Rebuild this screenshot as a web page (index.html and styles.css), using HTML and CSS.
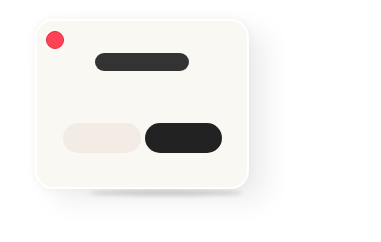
FILE: index.html
```html
<!DOCTYPE html>
<html lang="en">
<head>
  <meta charset="UTF-8">
  <meta name="viewport" content="width=device-width, initial-scale=1.0">
  <title>Dialog</title>
  <link rel="stylesheet" href="styles.css">
</head>
<body>
  <div class="dialog">
    <!-- 关闭按钮 -->
    <div class="close-dot"></div>

    <!-- 标题条 -->
    <div class="title-bar"></div>

    <!-- 底部按钮 -->
    <div class="actions">
      <div class="btn btn-cancel"></div>
      <div class="btn btn-ok"></div>
    </div>
  </div>
</body>
</html>
```

FILE: styles.css
```css
html {
  background: #ffffff;
}

body {
  margin: 0;
  box-sizing: border-box;
  min-height: 242px;
  padding: 19px 0 0 35px;
  font-family: "Liberation Sans", sans-serif;
}

.dialog {
  position: relative;
  box-sizing: border-box;
  width: 214px;
  height: 170px;
  padding: 32px 0 0;
  display: flex;
  flex-direction: column;
  align-items: center;
  background: #f9f8f3;
  border: 2px solid #ffffff;
  border-radius: 18px;
  box-shadow: 0 0 10px rgba(0, 0, 0, 0.05), 18px 12px 28px rgba(0, 0, 0, 0.07);
}

/* 底部接触阴影 */
.dialog::before {
  content: '';
  position: absolute;
  left: 52px;
  right: 4px;
  bottom: -9px;
  height: 6px;
  border-radius: 50%;
  background: rgba(0, 0, 0, 0.16);
  filter: blur(2px);
  z-index: -1;
}

.close-dot {
  position: absolute;
  left: 9px;
  top: 10px;
  width: 18px;
  height: 18px;
  box-sizing: border-box;
  border-radius: 50%;
  background: #ff4256;
  border: 1px solid #e82a3f;
}

.title-bar {
  width: 94px;
  height: 18px;
  border-radius: 9px;
  background: #333333;
}

.actions {
  display: flex;
  gap: 4px;
  margin-top: 52px;
}

.btn {
  width: 78px;
  height: 30px;
  border-radius: 15px;
}

.btn-cancel {
  background: #f3ece4;
}

.btn-ok {
  width: 77px;
  background: #222222;
}
```
